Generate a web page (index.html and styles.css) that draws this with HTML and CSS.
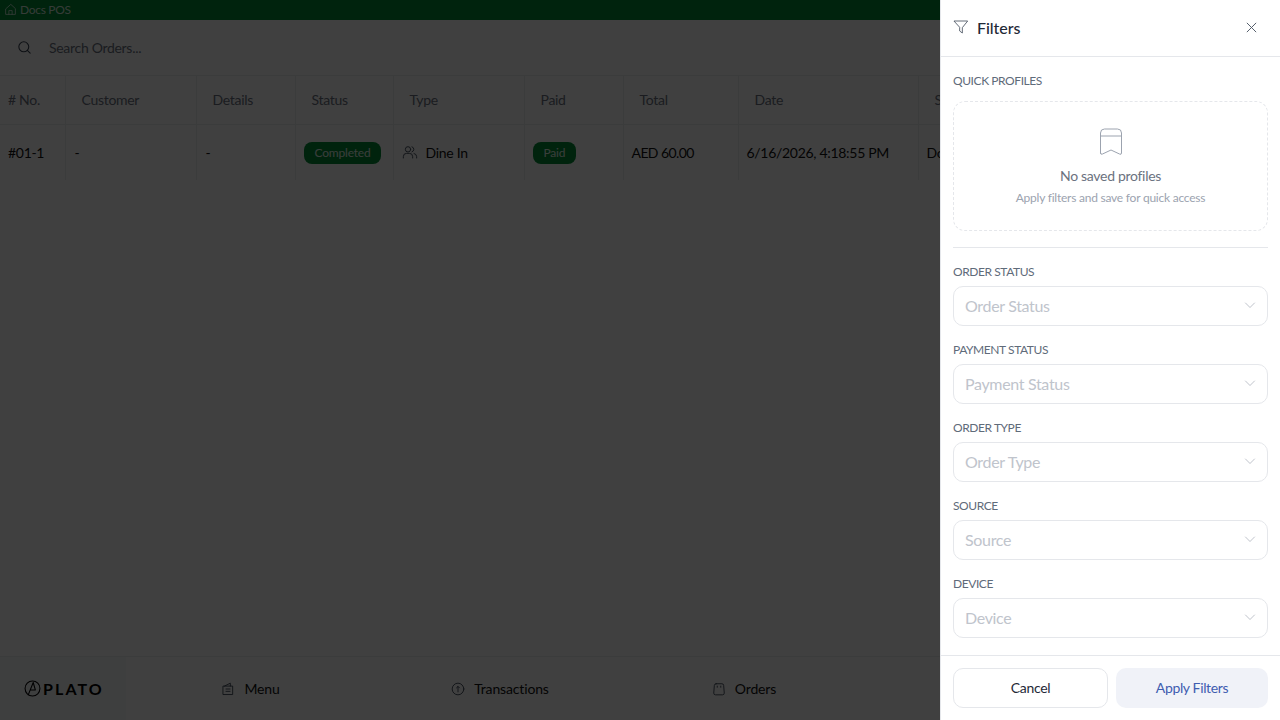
FILE: index.html
```html
<!DOCTYPE html>
<html lang="en">
<head>
<meta charset="utf-8">
<title>Docs POS</title>
<link rel="stylesheet" href="styles.css">
</head>
<body>
<div class="app">
  <div class="topbar">
    <svg class="ico-top" viewBox="0 0 24 24"><path d="M12 3 3 11v10h18V11z"/><path d="M9 21v-7h6v7"/></svg>
    <span>Docs POS</span>
  </div>
  <div class="search">
    <svg class="ico-search" viewBox="0 0 24 24"><circle cx="11" cy="11" r="7"/><path d="m20 20-4-4"/></svg>
    <span>Search Orders...</span>
  </div>
  <div class="table-wrap">
    <table class="orders">
      <colgroup>
        <col class="c1"><col class="c2"><col class="c3"><col class="c4"><col class="c5"><col class="c6"><col class="c7"><col class="c8"><col class="c9">
      </colgroup>
      <thead>
        <tr>
          <th class="first"># No.</th><th>Customer</th><th>Details</th><th>Status</th><th>Type</th><th>Paid</th><th>Total</th><th>Date</th><th>Source</th>
        </tr>
      </thead>
      <tbody>
        <tr>
          <td class="first">#01-1</td>
          <td class="dash">-</td>
          <td class="dash">-</td>
          <td><span class="pill">Completed</span></td>
          <td>
            <span class="type">
              <svg class="ico-users" viewBox="0 0 24 24"><circle cx="9" cy="8" r="4"/><path d="M2 21v-2a5 5 0 0 1 5-5h4a5 5 0 0 1 5 5v2"/><path d="M15 4.200a4 4 0 0 1 0 7.600"/><path d="M22 21v-2a5 5 0 0 0-4-4.800"/></svg>
              Dine In
            </span>
          </td>
          <td><span class="pill">Paid</span></td>
          <td class="total">AED 60.00</td>
          <td>6/16/2026, 4:18:55 PM</td>
          <td>Docs POS</td>
        </tr>
      </tbody>
    </table>
  </div>
  <nav class="bottom">
    <div class="logo">
      <svg class="logo-mark" viewBox="0 0 24 24"><circle cx="12" cy="12" r="10.500"/><path d="M6 21 13 3.500 16 14H9"/></svg>
      <span class="logo-text">PLATO</span>
    </div>
    <div class="nav-items">
      <div class="nav-item nav-first">
        <svg class="ico-nav" viewBox="0 0 24 24"><path d="M4 7h16v14.500H4z"/><path d="M6 7l10-5v5M8.500 12h7M8.500 16h7"/></svg>
        <span>Menu</span>
      </div>
      <div class="nav-item">
        <svg class="ico-nav" viewBox="0 0 24 24"><circle cx="12" cy="12" r="10"/><path d="M12 17V8M9.500 10 12 7.500l2.500 2.500"/></svg>
        <span>Transactions</span>
      </div>
      <div class="nav-item nav-last">
        <svg class="ico-nav" viewBox="0 0 24 24"><path d="M7 3h10a3 3 0 0 1 3 3l1 13a3 3 0 0 1-3 3H6a3 3 0 0 1-3-3L4 6a3 3 0 0 1 3-3z"/><path d="M9 7v2M15 7v2"/></svg>
        <span>Orders</span>
      </div>
    </div>
  </nav>
</div>

<div class="overlay"></div>

<aside class="panel">
  <header class="panel-head">
    <svg class="ico-funnel" viewBox="0 0 24 24"><path d="M2 3h20l-8 10v8l-4-3v-5z"/></svg>
    <h2>Filters</h2>
    <svg class="ico-close" viewBox="0 0 24 24"><path d="M5 5l14 14M19 5 5 19"/></svg>
  </header>
  <div class="panel-body">
    <div class="label label-first">Quick Profiles</div>
    <div class="empty">
      <svg class="ico-book" viewBox="0 0 24 30"><path d="M1.500 26V6a4 4 0 0 1 4-4h13a4 4 0 0 1 4 4v20q0 2-2 1l-8.500-4-8.500 4q-2 1-2-1z"/><path d="M1.500 9h21"/></svg>
      <div class="empty-title">No saved profiles</div>
      <div class="empty-sub">Apply filters and save for quick access</div>
    </div>
    <div class="divider"></div>
    <div class="field">
      <div class="label">Order Status</div>
      <div class="select"><span>Order Status</span><svg class="ico-chev" viewBox="0 0 24 24"><path d="m3 8 9 9 9-9"/></svg></div>
    </div>
    <div class="field">
      <div class="label">Payment Status</div>
      <div class="select"><span>Payment Status</span><svg class="ico-chev" viewBox="0 0 24 24"><path d="m3 8 9 9 9-9"/></svg></div>
    </div>
    <div class="field">
      <div class="label">Order Type</div>
      <div class="select"><span>Order Type</span><svg class="ico-chev" viewBox="0 0 24 24"><path d="m3 8 9 9 9-9"/></svg></div>
    </div>
    <div class="field">
      <div class="label">Source</div>
      <div class="select"><span>Source</span><svg class="ico-chev" viewBox="0 0 24 24"><path d="m3 8 9 9 9-9"/></svg></div>
    </div>
    <div class="field">
      <div class="label">Device</div>
      <div class="select"><span>Device</span><svg class="ico-chev" viewBox="0 0 24 24"><path d="m3 8 9 9 9-9"/></svg></div>
    </div>
  </div>
  <footer class="panel-foot">
    <button class="btn btn-cancel">Cancel</button>
    <button class="btn btn-apply">Apply Filters</button>
  </footer>
</aside>
</body>
</html>
```
FILE: styles.css
```css
* { box-sizing: border-box; }
html, body { margin: 0; height: 100%; overflow: hidden; }
body { font-family: "Lato", "Liberation Sans", sans-serif; background: #fff; color: #000; letter-spacing: -.3px; }
svg { fill: none; stroke: currentColor; stroke-width: 1.5; stroke-linecap: round; stroke-linejoin: round; flex: none; }

.app { height: 720px; display: flex; flex-direction: column; }
.topbar { height: 20px; background: #008a35; color: #d5ecdd; display: flex; align-items: center; gap: 3px; padding: 0 0 2px 4px; font-size: 12px; }
.ico-top { width: 13px; height: 13px; }

.search { height: 56px; display: flex; align-items: center; gap: 16px; padding-left: 16px; border-bottom: 1px solid #eceef0; color: #6b7280; font-size: 14px; }
.ico-search { width: 17px; height: 17px; color: #374151; }

.table-wrap { flex: 1; overflow: hidden; }
.orders { border-collapse: collapse; table-layout: fixed; width: 1039px; font-size: 14px; }
.c1 { width: 65px; } .c2 { width: 131px; } .c3 { width: 99px; } .c4 { width: 98px; } .c5 { width: 131px; }
.c6 { width: 99px; } .c7 { width: 115px; } .c8 { width: 180px; } .c9 { width: 121px; }
.orders th { height: 48px; padding: 0 16px; text-align: left; font-weight: 400; color: #6b7280; border-right: 1px solid #eceef0; border-bottom: 1px solid #eceef0; }
.orders th.first { padding-left: 8px; }
.orders td { height: 56px; padding: 0 8px; border-right: 1px solid #eceef0; color: #111; }
.orders td.dash { padding-left: 9px; }
.orders td.total { letter-spacing: -.6px; }
.pill { display: inline-block; height: 22px; line-height: 22px; padding: 0 11px; border-radius: 8px; background: #008a35; color: #e4f5ea; font-size: 12px; letter-spacing: -.2px; position: relative; top: 1px; }
.type { display: flex; align-items: center; gap: 8px; }
.ico-users { width: 16px; height: 16px; color: #4b5563; }

.bottom { height: 64px; border-top: 1px solid #eceef0; display: flex; }
.logo { width: 126px; background: #f8f9fc; display: flex; align-items: center; gap: 2px; padding-left: 24px; }
.logo-mark { width: 17px; height: 17px; color: #000; }
.logo-text { font-size: 16px; font-weight: 700; letter-spacing: 2.1px; color: #000; }
.nav-items { display: flex; }
.nav-item { width: 250px; display: flex; align-items: center; justify-content: center; gap: 9px; font-size: 14px; color: #111; letter-spacing: -.15px; }
.nav-first { width: 249px; }
.nav-last { width: 238px; }
.ico-nav { width: 14px; height: 14px; color: #374151; }

.overlay { position: fixed; inset: 0; background: rgba(0, 0, 0, .75); }

.panel { position: fixed; top: 0; right: 0; bottom: 0; width: 340px; background: #fff; display: flex; flex-direction: column; border-left: 1px solid #e5e7eb; }
.panel-head { height: 57px; flex: none; display: flex; align-items: center; padding: 0 21px 2px 12px; border-bottom: 1px solid #e5e7eb; }
.panel-head h2 { flex: 1; margin: 0 0 0 8px; font-size: 16px; font-weight: 500; color: #1f2937; letter-spacing: -.05px; }
.ico-funnel { width: 16px; height: 16px; color: #4b5563; stroke-width: 1.3; }
.ico-close { width: 15px; height: 15px; color: #4b5563; }

.panel-body { flex: 1; padding: 16px 12px 0; overflow: hidden; }
.label { height: 16px; line-height: 16px; font-size: 12px; text-transform: uppercase; color: #5f6b7a; margin-bottom: 6px; letter-spacing: -.42px; }
.label-first { margin-bottom: 12px; }
.empty { height: 130px; border: 1px dashed #e5e7eb; border-radius: 12px; display: flex; flex-direction: column; align-items: center; padding-top: 25px; }
.ico-book { width: 24px; height: 30px; color: #9ca3af; stroke-width: 1; margin-bottom: 2px; }
.empty-title { margin-top: 7px; font-size: 14px; color: #6b7280; line-height: 20px; }
.empty-sub { margin-top: 4px; font-size: 12px; color: #9ca3af; line-height: 16px; letter-spacing: -.23px; }
.divider { height: 1px; background: #e5e7eb; margin: 16px 0; }
.field { height: 78px; }
.select { height: 40px; border: 1px solid #e5e7eb; border-radius: 10px; display: flex; align-items: center; justify-content: space-between; padding: 0 11px 2px 11px; font-size: 16px; color: #c0c4cc; letter-spacing: -.33px; }
.ico-chev { width: 12px; height: 12px; color: #9ca3af; stroke-width: 1.300; }

.panel-foot { height: 65px; flex: none; border-top: 1px solid #e5e7eb; display: flex; gap: 8px; padding: 12px; }
.btn { height: 40px; border-radius: 10px; font-family: inherit; font-size: 14px; letter-spacing: -.35px; padding: 0 0 2px; }
.btn-cancel { width: 155px; background: #fff; border: 1px solid #e5e7eb; color: #1f2937; }
.btn-apply { width: 152px; background: #f0f2f8; border: 0; color: #3f5db0; }
```
